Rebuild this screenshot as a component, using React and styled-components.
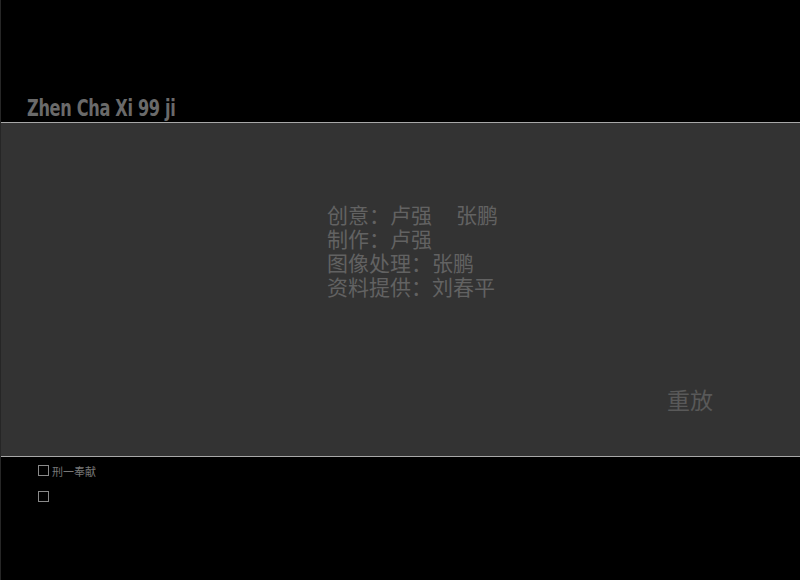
import React from 'react'
import styled, { createGlobalStyle } from 'styled-components'

const GlobalStyle = createGlobalStyle`
    html, body {
        margin: 0;
        padding: 0;
        background: #000;
    }
`

const lineColor = "#a8a8a8";
const textColor = "#626262";
const cjkFont = `"Noto Sans CJK SC", "Noto Sans", sans-serif`;

const Page = styled.div`
    width: 799px;
    height: 580px;
    border-left: 1px solid #262626;
    display: flex;
    flex-direction: column;
    background: #000;
    overflow: hidden;
`

const Header = styled.header`
    height: 123px;
    display: flex;
    align-items: flex-end;
    padding: 0 0 1px 26px;
    box-sizing: border-box;
    border-bottom: 1px solid ${lineColor};
`

// 标题用窄粗体，横向压一下
const Title = styled.h1`
    margin: 0;
    font-family: "DejaVu Sans Condensed", "Liberation Sans Narrow", sans-serif;
    font-weight: bold;
    font-size: 23px;
    line-height: 26px;
    letter-spacing: -0.4px;
    color: #6a6a6a;
    transform: scaleX(0.78);
    transform-origin: left bottom;
    white-space: nowrap;
`

const Stage = styled.main`
    height: 334px;
    background: #333333;
    display: flex;
    flex-direction: column;
    padding-top: 79px;
    box-sizing: border-box;
    border-bottom: 1px solid ${lineColor};
`

const Credits = styled.div`
    margin-left: 326px;
    font-family: ${cjkFont};
    font-size: 21px;
    line-height: 24px;
    color: ${textColor};
`

const CreditLine = styled.div`
    white-space: nowrap;
`

const NameGap = styled.span`
    display: inline-block;
    width: 24px;
`

// 重放 按钮
const Replay = styled.button`
    align-self: flex-start;
    margin: 86px 0 0 666px;
    padding: 0;
    border: none;
    background: none;
    font-family: ${cjkFont};
    font-size: 23px;
    line-height: 30px;
    color: #595959;
    cursor: pointer;
`

const Footer = styled.footer`
    flex: 1;
    display: flex;
    flex-direction: column;
    gap: 15px;
    padding: 8px 0 0 37px;
`

const CheckRow = styled.label`
    display: flex;
    align-items: center;
    gap: 3px;
    height: 11px;
    font-family: ${cjkFont};
    font-size: 11px;
    color: #777;
`

const Box = styled.span`
    width: 9px;
    height: 9px;
    border: 1px solid #8a8a8a;
    flex-shrink: 0;
`

export default function App() {
    return (
        <>
            <GlobalStyle />
            <Page>
                <Header>
                    <Title>Zhen Cha Xi 99 ji</Title>
                </Header>
                <Stage>
                    <Credits>
                        <CreditLine>创意：卢强<NameGap />张鹏</CreditLine>
                        <CreditLine>制作：卢强</CreditLine>
                        <CreditLine>图像处理：张鹏</CreditLine>
                        <CreditLine>资料提供：刘春平</CreditLine>
                    </Credits>
                    <Replay>重放</Replay>
                </Stage>
                <Footer>
                    <CheckRow><Box />刑一奉献</CheckRow>
                    <CheckRow><Box /></CheckRow>
                </Footer>
            </Page>
        </>
    )
}
